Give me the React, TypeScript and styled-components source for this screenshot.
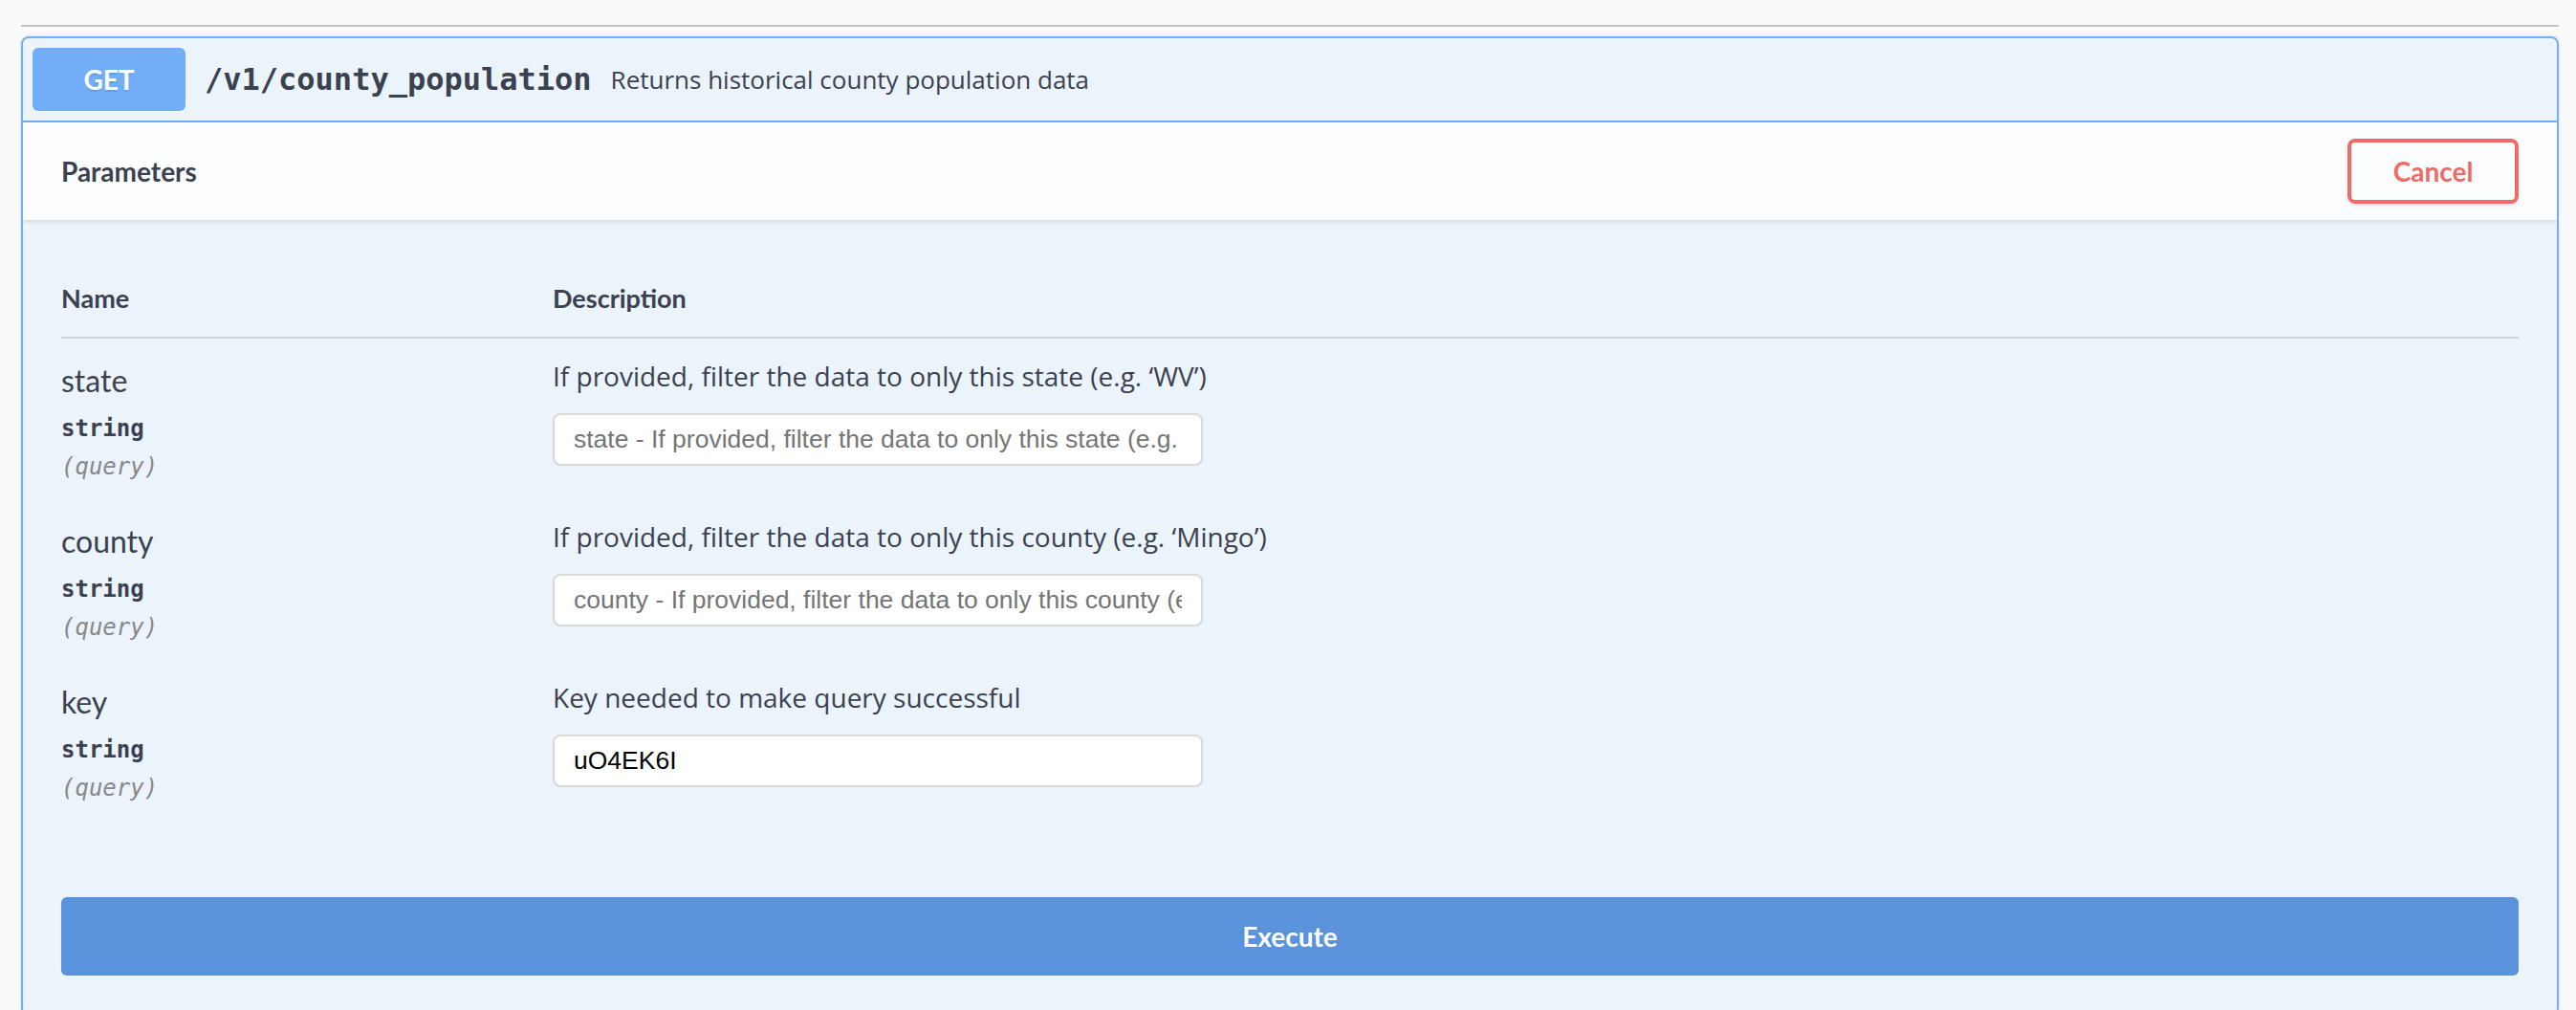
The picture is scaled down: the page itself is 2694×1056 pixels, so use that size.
import styled, { createGlobalStyle } from 'styled-components';

const GlobalStyle = createGlobalStyle`
  body {
    margin: 0;
    background: #fafafa;
    color: #3b4151;
  }
`;

const Page = styled.div`
  padding: 0 18px 0 22px;
  font-family: Lato, "Open Sans", sans-serif;
`;

const TagDivider = styled.div`
  height: 26px;
  border-bottom: 2px solid #c1c3c7;
`;

const Opblock = styled.div`
  margin-top: 10px;
  border: 2px solid #72aef8;
  border-radius: 8px;
  background: #ebf3fb;
  box-shadow: 0 0 4px rgba(0, 0, 0, 0.12);
  overflow: hidden;
`;

const Summary = styled.div`
  display: flex;
  align-items: center;
  padding: 10px;
  border-bottom: 2px solid #72aef8;
`;

const MethodBadge = styled.span`
  display: flex;
  align-items: center;
  justify-content: center;
  width: 160px;
  height: 66px;
  border-radius: 6px;
  background: #72aef8;
  color: #fff;
  font-size: 28px;
  font-weight: 700;
  text-shadow: 0 2px 0 rgba(0, 0, 0, 0.1);
`;

const PathText = styled.span`
  padding: 0 20px;
  font-family: "DejaVu Sans Mono", "Liberation Mono", monospace;
  font-size: 32px;
  font-weight: 700;
  color: #3b4151;
`;

const SummaryDescription = styled.span`
  font-family: "Open Sans", sans-serif;
  font-size: 26px;
  color: #3b4151;
`;

const SectionHeader = styled.div`
  display: flex;
  align-items: center;
  justify-content: space-between;
  box-sizing: border-box;
  height: 102px;
  padding: 0 40px;
  background: rgba(255, 255, 255, 0.8);
  box-shadow: 0 2px 4px rgba(0, 0, 0, 0.1);
`;

const SectionTitle = styled.h4`
  margin: 0;
  font-size: 28px;
  font-weight: 700;
  color: #3b4151;
`;

const CancelButton = styled.button`
  box-sizing: border-box;
  width: 179px;
  height: 68px;
  border: 4px solid #ee6b66;
  border-radius: 8px;
  background: transparent;
  color: #ee6b66;
  font-family: Lato, sans-serif;
  font-size: 28px;
  font-weight: 700;
  box-shadow: 0 2px 4px rgba(0, 0, 0, 0.1);
`;

const TableContainer = styled.div`
  padding: 40px 40px 40px;
`;

const ParamTable = styled.div`
  display: grid;
  grid-template-columns: 514px 1fr;
`;

const HeadCell = styled.div`
  padding: 24px 0 22px;
  line-height: 36px;
  font-size: 27px;
  font-weight: 700;
  color: #3b4151;
  border-bottom: 2px solid #cfd3da;
`;

const Cell = styled.div`
  padding: 20px 0;
  display: flex;
  flex-direction: column;
  align-items: flex-start;
`;

const ParamName = styled.div`
  font-size: 32px;
  line-height: 48px;
  color: #3b4151;
`;

const ParamType = styled.div`
  margin-top: 12px;
  font-family: "DejaVu Sans Mono", monospace;
  font-size: 24px;
  line-height: 28px;
  font-weight: 700;
  color: #3b4151;
`;

const ParamIn = styled.div`
  margin-top: 12px;
  font-family: "DejaVu Sans Mono", monospace;
  font-size: 24px;
  line-height: 28px;
  font-style: italic;
  color: #888;
`;

const ParamDescription = styled.p`
  margin: 0 0 19px;
  font-family: "Open Sans", sans-serif;
  font-size: 28px;
  line-height: 39px;
  color: #3b4151;
`;

const ParamInput = styled.input`
  box-sizing: border-box;
  width: 680px;
  height: 55px;
  margin: 0 0 15px;
  padding: 0 20px;
  border: 2px solid #d9d9d9;
  border-radius: 8px;
  background: #fff;
  font-family: "Liberation Sans", Arial, sans-serif;
  font-size: 26.5px;
  color: #000;
  outline: none;

  &::placeholder {
    color: #757575;
  }
`;

const ExecuteWrapper = styled.div`
  padding: 40px;
`;

const ExecuteButton = styled.button`
  display: block;
  width: 100%;
  height: 82px;
  border: none;
  border-radius: 6px;
  background: #5a92dc;
  color: #fff;
  font-family: Lato, sans-serif;
  font-size: 28px;
  font-weight: 700;
`;

const params = [
  {
    name: 'state',
    description: 'If provided, filter the data to only this state (e.g. \u2018WV\u2019)',
    placeholder: 'state - If provided, filter the data to only this state (e.g. \u2018WV\u2019)',
  },
  {
    name: 'county',
    description: 'If provided, filter the data to only this county (e.g. \u2018Mingo\u2019)',
    placeholder: 'county - If provided, filter the data to only this county (e.g. \u2018Mingo\u2019)',
  },
  {
    name: 'key',
    description: 'Key needed to make query successful',
    placeholder: 'key - Key needed to make query successful',
    value: 'uO4EK6I',
  },
];

export default function App() {
  return (
    <>
      <GlobalStyle />
      <Page>
        <TagDivider />
        <Opblock>
          <Summary>
            <MethodBadge>GET</MethodBadge>
            <PathText>/v1/county_population</PathText>
            <SummaryDescription>Returns historical county population data</SummaryDescription>
          </Summary>
          <SectionHeader>
            <SectionTitle>Parameters</SectionTitle>
            <CancelButton>Cancel</CancelButton>
          </SectionHeader>
          <TableContainer>
            <ParamTable>
              <HeadCell>Name</HeadCell>
              <HeadCell>Description</HeadCell>
              {params.map((p) => (
                <>
                  <Cell key={p.name + '-name'}>
                    <ParamName>{p.name}</ParamName>
                    <ParamType>string</ParamType>
                    <ParamIn>(query)</ParamIn>
                  </Cell>
                  <Cell key={p.name + '-desc'}>
                    <ParamDescription>{p.description}</ParamDescription>
                    <ParamInput placeholder={p.placeholder} defaultValue={p.value} />
                  </Cell>
                </>
              ))}
            </ParamTable>
          </TableContainer>
          <ExecuteWrapper>
            <ExecuteButton>Execute</ExecuteButton>
          </ExecuteWrapper>
        </Opblock>
      </Page>
    </>
  );
}
